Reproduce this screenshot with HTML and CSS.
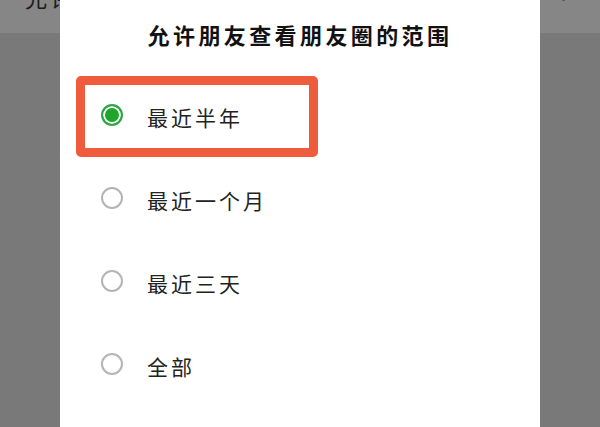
FILE: index.html
```html
<!DOCTYPE html>
<html lang="zh-CN">
<head>
  <meta charset="UTF-8">
  <title>朋友圈范围</title>
  <link rel="stylesheet" href="styles.css">
</head>
<body>

  <div class="page">
    <div class="page-row">
      <span class="page-label">允许朋友查看朋友圈的范围</span>
      <span class="page-arrow">&gt;</span>
    </div>
  </div>

  <div class="dialog">
    <h1 class="dialog-title">允许朋友查看朋友圈的范围</h1>

    <div class="options">
      <div class="option selected">
        <span class="radio"></span>
        <span class="option-text">最近半年</span>
      </div>
      <div class="option">
        <span class="radio"></span>
        <span class="option-text">最近一个月</span>
      </div>
      <div class="option">
        <span class="radio"></span>
        <span class="option-text">最近三天</span>
      </div>
      <div class="option">
        <span class="radio"></span>
        <span class="option-text">全部</span>
      </div>
    </div>
  </div>

</body>
</html>
```

FILE: styles.css
```css
body {
  margin: 0;
  width: 600px;
  height: 427px;
  overflow: hidden;
  position: relative;
  background-color: #797979;
  font-family: "Noto Sans CJK SC", "Noto Sans", sans-serif;
}

.page-row {
  height: 33px;
  display: flex;
  justify-content: space-between;
  align-items: flex-start;
  padding: 0 28px 0 25px;
  background-color: #868686;
  overflow: hidden;
}

.page-label {
  font-size: 22px;
  line-height: 22px;
  margin-top: -14px;
  color: #1c1c1c;
  letter-spacing: 3px;
}

.page-arrow {
  font-size: 18px;
  line-height: 18px;
  margin-top: -13px;
  color: #333;
}

.dialog {
  position: absolute;
  left: 60px;
  top: 0;
  width: 480px;
  height: 427px;
  background-color: #fff;
}

.dialog-title {
  margin: 0;
  padding-top: 19px;
  font-size: 22px;
  line-height: 30px;
  font-weight: bold;
  text-align: center;
  letter-spacing: 3.4px;
  color: #111;
}

.options {
  margin-top: 27px;
  margin-left: 16px;
  display: flex;
  flex-direction: column;
  gap: 2px;
}

.option {
  box-sizing: border-box;
  width: 242px;
  height: 81px;
  display: flex;
  align-items: center;
  padding-left: 16px;
  border: 9px solid transparent;
  border-radius: 5px;
}

.option.selected {
  border-color: #ee5b3d;
}

.radio {
  box-sizing: border-box;
  width: 22px;
  height: 22px;
  border-radius: 50%;
  border: 2px solid #b4b4b4;
  margin-right: 24px;
  margin-top: -4px;
  flex-shrink: 0;
}

.selected .radio {
  border-color: #2aa845;
  background-color: #1fa52c;
  box-shadow: inset 0 0 0 2px #fff;
}

.option-text {
  font-size: 21px;
  line-height: 28px;
  letter-spacing: 3px;
  color: #222;
  white-space: nowrap;
}
```
